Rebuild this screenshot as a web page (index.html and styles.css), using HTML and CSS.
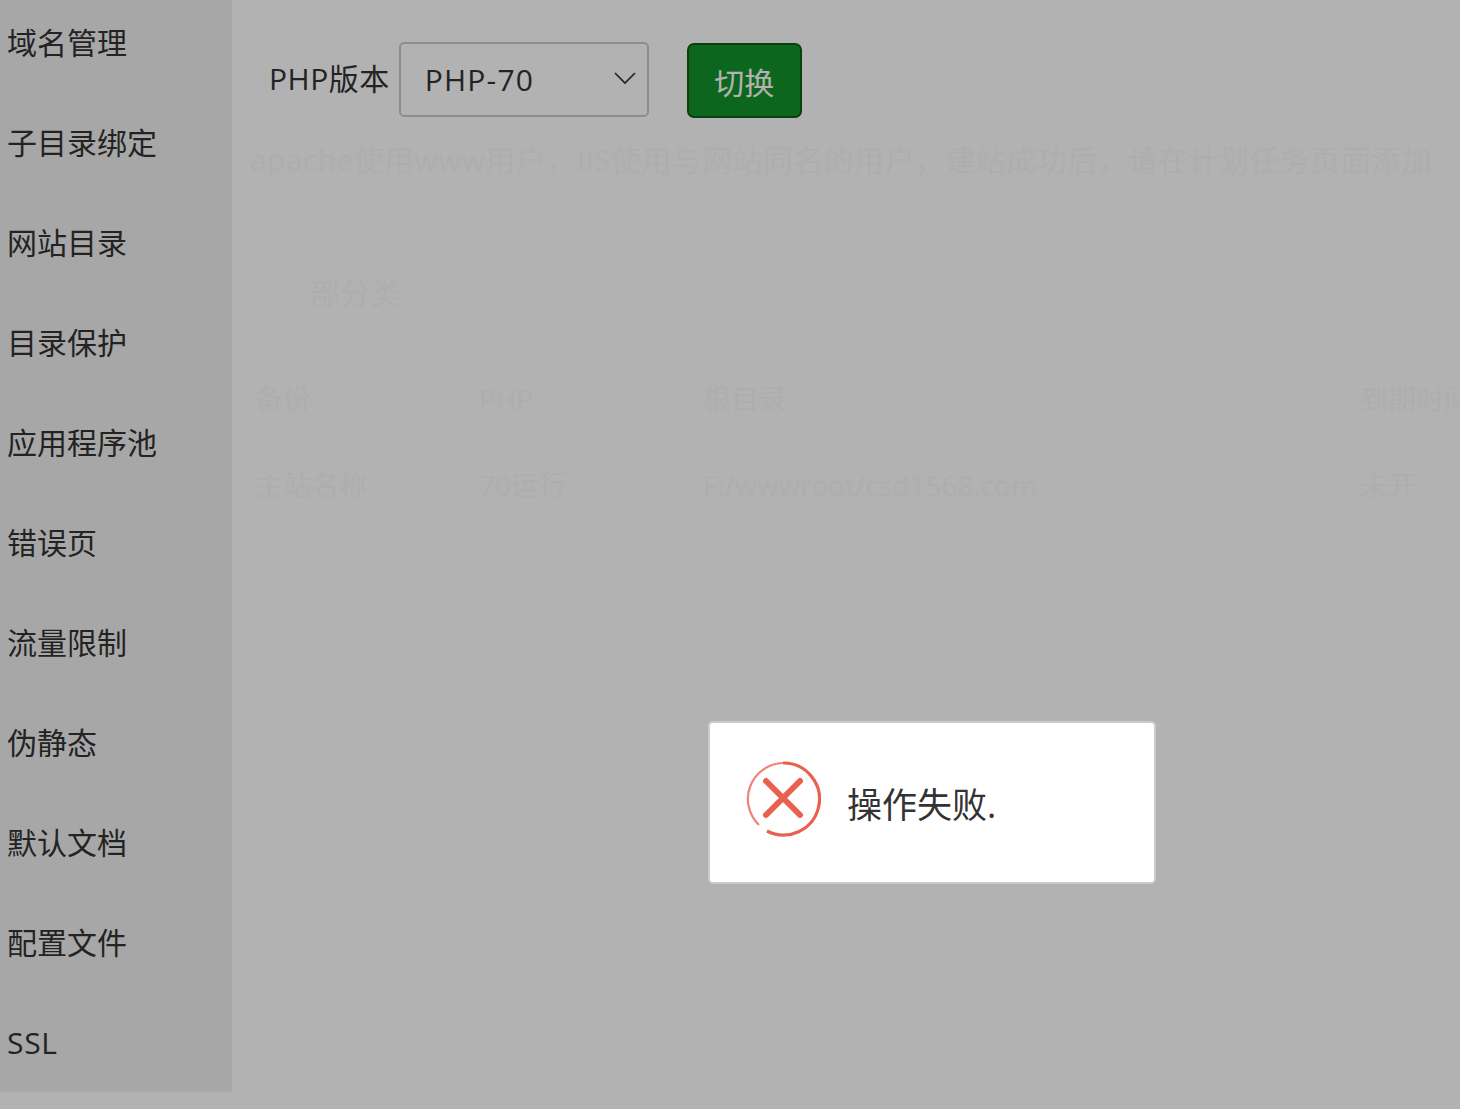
FILE: index.html
```html
<!DOCTYPE html>
<html lang="zh-CN">
<head>
  <meta charset="UTF-8" />
  <title>PHP版本</title>
  <link rel="stylesheet" href="styles.css">
</head>
<body>

  <div class="layout">
    <ul class="side-menu">
      <li>域名管理</li>
      <li>子目录绑定</li>
      <li>网站目录</li>
      <li>目录保护</li>
      <li>应用程序池</li>
      <li>错误页</li>
      <li>流量限制</li>
      <li>伪静态</li>
      <li>默认文档</li>
      <li>配置文件</li>
      <li class="latin">SSL</li>
    </ul>

    <div class="main">
      <div class="php-row">
        <span class="php-label">PHP版本</span>
        <div class="php-select">
          <span class="php-value">PHP-70</span>
          <svg class="caret" width="24" height="14" viewBox="0 0 24 14"><path d="M2 2l10 10L22 2" fill="none" stroke="#333" stroke-width="1.7"/></svg>
        </div>
        <button class="switch-btn">切换</button>
      </div>

      <!-- Barely visible content behind the overlay -->
      <p class="ghost ghost-tip">apache使用www用户，IIS使用与网站同名的用户，建站成功后，请在计划任务页面添加</p>
      <p class="ghost ghost-filter">部分类</p>
      <div class="ghost ghost-table">
        <span>备份</span><span>PHP</span><span>根目录</span><span>到期时间</span>
        <span>主站名称</span><span>70运行</span><span>F:/wwwroot/csd1568.com</span><span>未开</span>
      </div>
    </div>
  </div>

  <!-- Overlay and message box -->
  <div class="shade"></div>
  <div class="msg-box">
    <svg class="msg-icon" width="76" height="76" viewBox="0 0 76 76">
      <path d="M14 64A36 36 0 0 1 38 2" fill="none" stroke="#ee8478" stroke-width="2.2"/>
      <path d="M38 2A36 36 0 1 1 22 70" fill="none" stroke="#e9604f" stroke-width="3.2"/>
      <path d="M21 20L55 54M55 20L21 54" fill="none" stroke="#e9604f" stroke-width="6" stroke-linecap="round"/>
    </svg>
    <span class="msg-text">操作失败.</span>
  </div>

</body>
</html>
```

FILE: styles.css
```css
body {
  margin: 0;
  height: 1109px;
  overflow: hidden;
  background-color: #fff;
  color: #333;
  font-family: 'Open Sans', 'Noto Sans CJK SC', sans-serif;
}

.layout {
  display: flex;
  align-items: flex-start;
}

.side-menu {
  width: 232px;
  height: 1092px;
  margin: 0;
  padding: 0;
  list-style: none;
  background-color: #f0f0f0;
  flex-shrink: 0;
}

.side-menu li {
  height: 100px;
  padding-left: 7px;
  font-size: 30px;
  line-height: 86px;
  color: #333;
}

.side-menu .latin {
  letter-spacing: 0.7px;
}

.main {
  flex: 1;
  min-width: 0;
  padding: 42px 0 0 38px;
}

.php-row {
  display: flex;
  align-items: flex-start;
  height: 76px;
}

.php-label {
  font-size: 30px;
  line-height: 76px;
  letter-spacing: 0.5px;
  margin: -1px 9px 0 -1px;
}

.php-select {
  width: 250px;
  height: 75px;
  box-sizing: border-box;
  border: 2px solid #ccc;
  border-radius: 5px;
  display: flex;
  align-items: center;
  justify-content: space-between;
  padding: 0 10px 0 24px;
  font-size: 30px;
  background: #fff;
}

.php-value {
  letter-spacing: 1.2px;
}

.caret {
  margin-top: -3px;
}

.switch-btn {
  width: 115px;
  height: 75px;
  margin: 1px 0 0 38px;
  background-color: #14932a;
  color: #fff;
  border: 2px solid #0d5c13;
  border-radius: 7px;
  font-family: inherit;
  font-size: 30px;
  padding: 0;
}

.ghost {
  color: #f9f9f9;
  font-size: 30px;
  white-space: nowrap;
}

.ghost-tip {
  margin: 22px 0 0 -20px;
  line-height: 40px;
  letter-spacing: 0.4px;
}

.ghost-filter {
  margin: 93px 0 0 40px;
  line-height: 40px;
}

.ghost-table {
  display: grid;
  grid-template-columns: 224px 224px 657px 224px;
  grid-auto-rows: 86px;
  margin: 66px 0 0 -15px;
  font-size: 28px;
  line-height: 40px;
}

.shade {
  position: fixed;
  inset: 0;
  background-color: rgba(0, 0, 0, 0.3);
}

.msg-box {
  position: fixed;
  left: 708px;
  top: 721px;
  width: 448px;
  height: 163px;
  box-sizing: border-box;
  display: flex;
  align-items: center;
  padding-left: 35px;
  background-color: #fff;
  border: 2px solid #cbcbcb;
  border-radius: 5px;
}

.msg-icon {
  flex-shrink: 0;
  margin-top: -8px;
  filter: blur(0.5px);
}

.msg-text {
  margin-left: 26px;
  font-size: 35px;
  color: #333;
}
```
